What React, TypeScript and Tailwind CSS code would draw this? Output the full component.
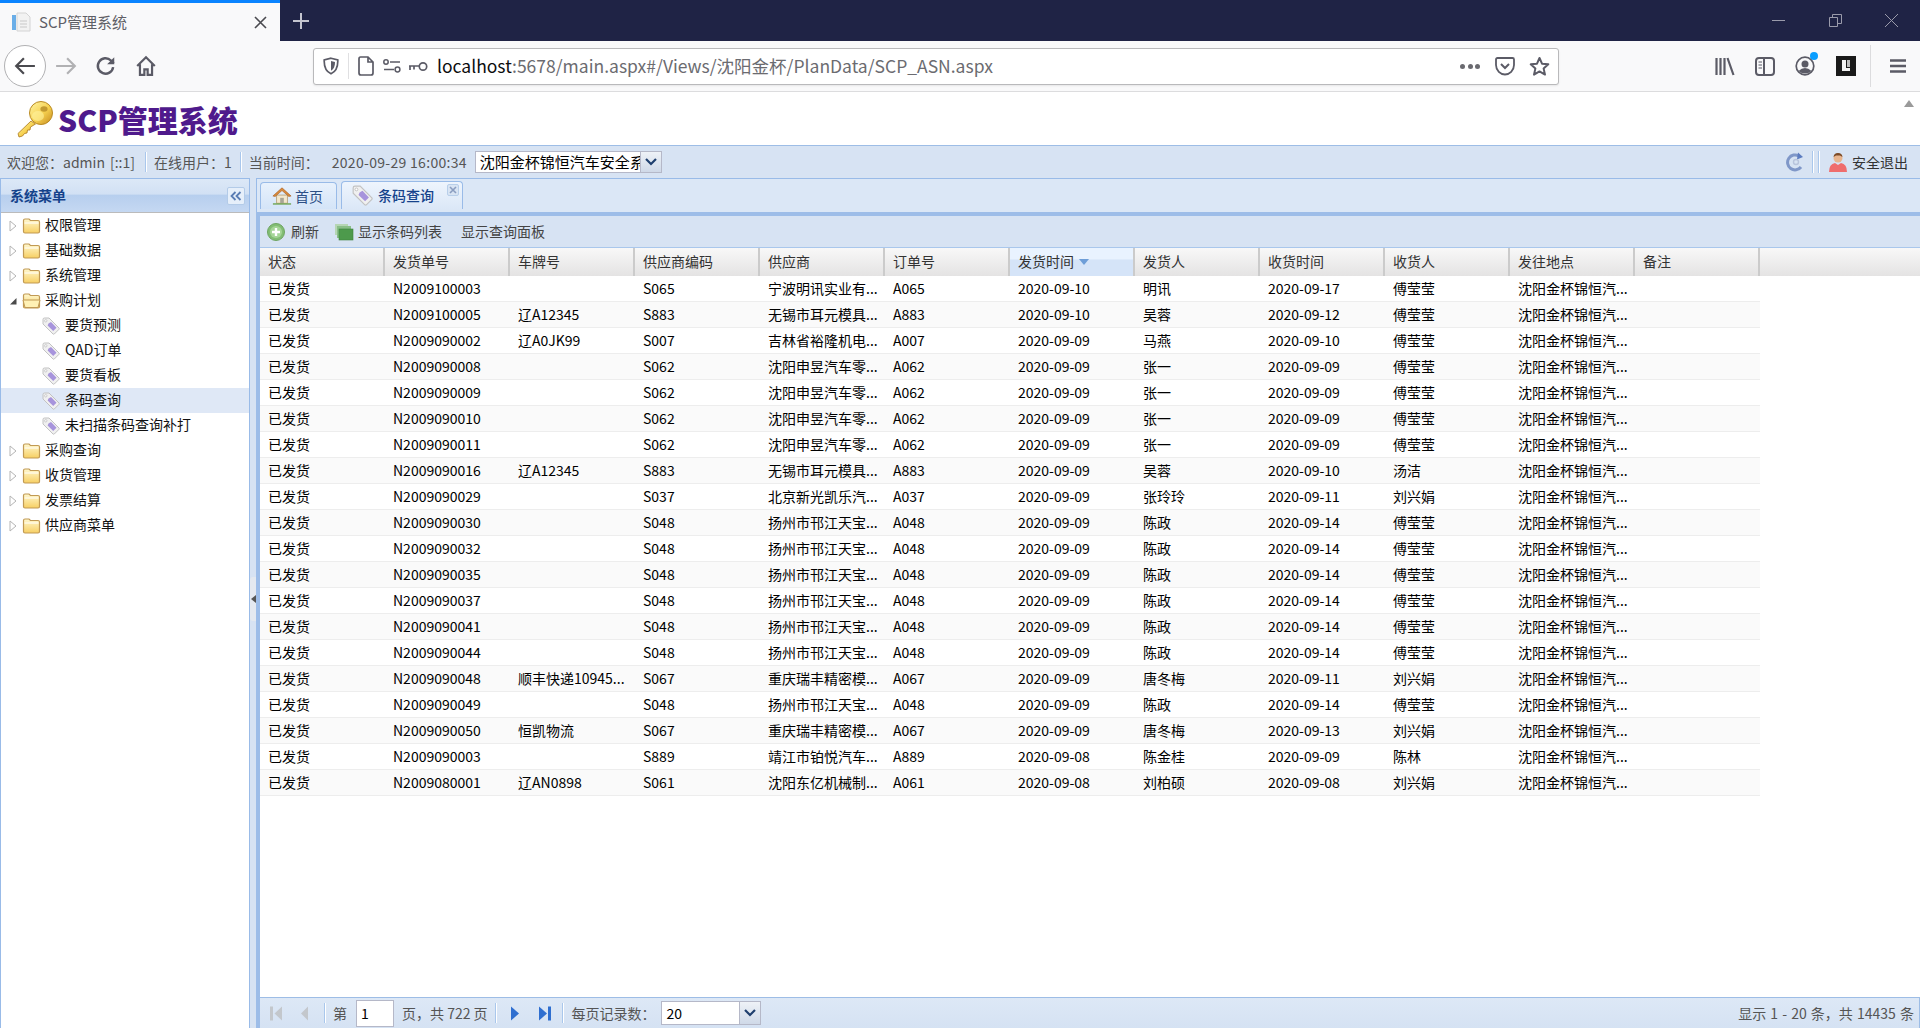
import React from "react";

const FF = "font-['Noto_Sans_CJK_SC','Microsoft_YaHei','Noto_Sans',sans-serif]";

const A = "沈阳金杯锦恒汽...";
const ZH = ["沈阳申昱汽车零...", "S062", "A062"];
const YZ = ["扬州市邗江天宝...", "S048", "A048"];
type R = [string, string, string, string, string, string, string, string, string];
const rows: R[] = [
  ["N2009100003", "", "S065", "宁波明讯实业有...", "A065", "2020-09-10", "明讯", "2020-09-17", "傅莹莹"],
  ["N2009100005", "辽A12345", "S883", "无锡市耳元模具...", "A883", "2020-09-10", "吴蓉", "2020-09-12", "傅莹莹"],
  ["N2009090002", "辽A0JK99", "S007", "吉林省裕隆机电...", "A007", "2020-09-09", "马燕", "2020-09-10", "傅莹莹"],
  ["N2009090008", "", ZH[1], ZH[0], ZH[2], "2020-09-09", "张一", "2020-09-09", "傅莹莹"],
  ["N2009090009", "", ZH[1], ZH[0], ZH[2], "2020-09-09", "张一", "2020-09-09", "傅莹莹"],
  ["N2009090010", "", ZH[1], ZH[0], ZH[2], "2020-09-09", "张一", "2020-09-09", "傅莹莹"],
  ["N2009090011", "", ZH[1], ZH[0], ZH[2], "2020-09-09", "张一", "2020-09-09", "傅莹莹"],
  ["N2009090016", "辽A12345", "S883", "无锡市耳元模具...", "A883", "2020-09-09", "吴蓉", "2020-09-10", "汤洁"],
  ["N2009090029", "", "S037", "北京新光凯乐汽...", "A037", "2020-09-09", "张玲玲", "2020-09-11", "刘兴娟"],
  ["N2009090030", "", YZ[1], YZ[0], YZ[2], "2020-09-09", "陈政", "2020-09-14", "傅莹莹"],
  ["N2009090032", "", YZ[1], YZ[0], YZ[2], "2020-09-09", "陈政", "2020-09-14", "傅莹莹"],
  ["N2009090035", "", YZ[1], YZ[0], YZ[2], "2020-09-09", "陈政", "2020-09-14", "傅莹莹"],
  ["N2009090037", "", YZ[1], YZ[0], YZ[2], "2020-09-09", "陈政", "2020-09-14", "傅莹莹"],
  ["N2009090041", "", YZ[1], YZ[0], YZ[2], "2020-09-09", "陈政", "2020-09-14", "傅莹莹"],
  ["N2009090044", "", YZ[1], YZ[0], YZ[2], "2020-09-09", "陈政", "2020-09-14", "傅莹莹"],
  ["N2009090048", "顺丰快递10945...", "S067", "重庆瑞丰精密模...", "A067", "2020-09-09", "唐冬梅", "2020-09-11", "刘兴娟"],
  ["N2009090049", "", YZ[1], YZ[0], YZ[2], "2020-09-09", "陈政", "2020-09-14", "傅莹莹"],
  ["N2009090050", "恒凯物流", "S067", "重庆瑞丰精密模...", "A067", "2020-09-09", "唐冬梅", "2020-09-13", "刘兴娟"],
  ["N2009090003", "", "S889", "靖江市铂悦汽车...", "A889", "2020-09-08", "陈金桂", "2020-09-09", "陈林"],
  ["N2009080001", "辽AN0898", "S061", "沈阳东亿机械制...", "A061", "2020-09-08", "刘柏硕", "2020-09-08", "刘兴娟"],
];
const headers = ["状态", "发货单号", "车牌号", "供应商编码", "供应商", "订单号", "发货时间", "发货人", "收货时间", "收货人", "发往地点", "备注"];

const Gray = "#5b5b66";

function Folder({ open }: { open?: boolean }) {
  return (
    <svg width="19" height="17" viewBox="0 0 19 17" className="shrink-0">
      <defs>
        <linearGradient id="fo" x1="0" y1="0" x2="0" y2="1">
          <stop offset="0" stopColor="#fff8cf" />
          <stop offset="1" stopColor="#f7cf63" />
        </linearGradient>
      </defs>
      <path d="M1.5 3.5 Q1.5 2 3 2 H7 L8.5 3.5 H16 Q17.5 3.5 17.5 5 V14.5 Q17.5 16 16 16 H3 Q1.5 16 1.5 14.5 Z" fill="url(#fo)" stroke="#c19a55" strokeWidth="1.2" />
      {open ? <path d="M1 8 H15 L18 8 L16 15.5 H3 Z" fill="#fff1b5" stroke="#c19a55" strokeWidth="1" /> : <path d="M2.5 6 H16.5" stroke="#fff" strokeWidth="1" />}
    </svg>
  );
}

function Tag({ size = 18 }: { size?: number }) {
  return (
    <svg width={size} height={size} viewBox="0 0 18 18" className="shrink-0">
      <path d="M1 2.5 Q1 1 2.5 1 H7 L17 11 Q17.5 11.7 17 12.3 L12.3 17 Q11.7 17.5 11 17 L1 7 Z" fill="#f0f0f0" stroke="#c2c2c2" />
      <path d="M6.5 6.5 L9 5 L14.5 10.8 L11.2 14 L5.6 8.6 Z" fill="#a794dc" />
      <circle cx="3.8" cy="3.8" r="1.2" fill="#fff" stroke="#b0b0b0" strokeWidth="0.6" />
    </svg>
  );
}

function Arrow({ open }: { open?: boolean }) {
  return open ? (
    <svg width="8" height="8" viewBox="0 0 8 8" className="shrink-0"><path d="M7.5 1 V7.5 H1 Z" fill="#4a4a4a" /></svg>
  ) : (
    <svg width="8" height="12" viewBox="0 0 8 12" className="shrink-0"><path d="M1 1 L7 6 L1 11 Z" fill="#fff" stroke="#b4b4b4" /></svg>
  );
}

function TreeFolder({ label, open }: { label: string; open?: boolean }) {
  return (
    <div className="flex h-[25px] items-center text-[14px] leading-[25px] text-[#111]">
      <div className="flex w-[21px] justify-center pl-[2px]"><Arrow open={open} /></div>
      <Folder open={open} />
      <span className="mb-[2px] ml-[4px]">{label}</span>
    </div>
  );
}

function TreeLeaf({ label, selected }: { label: string; selected?: boolean }) {
  return (
    <div className={`flex h-[25px] items-center pl-[41px] text-[14px] leading-[25px] text-[#111] ${selected ? "bg-[#dfe8f6]" : ""}`}>
      <Tag />
      <span className="mb-[2px] ml-[5px]">{label}</span>
    </div>
  );
}

function Home() {
  return (
    <svg width="20" height="20" viewBox="0 0 22 20" className="shrink-0">
      <path d="M5 9 H17 V18 H5 Z" fill="#f3e7cc" stroke="#b8a57f" />
      <path d="M9 12 H13 V18 H9 Z" fill="#a9a596" />
      <path d="M1 10 L11 1 L21 10 L18.5 10.5 L11 4 L3.5 10.5 Z" fill="#d98a3c" stroke="#a85f22" strokeWidth="0.7" />
      <path d="M1 18 H21 V19.5 H1 Z" fill="#6da34d" />
    </svg>
  );
}

function KeyLogo() {
  return (
    <svg width="37" height="38" viewBox="0 0 37 38" className="shrink-0">
      <defs>
        <linearGradient id="kg" x1="0" y1="0" x2="1" y2="1">
          <stop offset="0" stopColor="#fff6a8" />
          <stop offset="0.55" stopColor="#f6d04f" />
          <stop offset="1" stopColor="#c48a1e" />
        </linearGradient>
      </defs>
      <path d="M15 21 L2 33.5 L3 37 L6.5 36 L8.5 33.5 L11 33 L11.5 30 L14 30 L14.5 27 L19.5 24 Z" fill="url(#kg)" stroke="#a9781c" strokeWidth="0.8" />
      <circle cx="25" cy="13" r="11.5" fill="url(#kg)" stroke="#b98a24" />
      <ellipse cx="28" cy="9" rx="3.6" ry="2.8" fill="#b98f2a" opacity="0.85" />
      <ellipse cx="22" cy="16" rx="6" ry="5" fill="#fff3a0" opacity="0.6" />
    </svg>
  );
}

function Sep({ cls = "" }: { cls?: string }) {
  return <div className={`h-[20px] w-[2px] border-l border-[#a9c7ec] bg-white ${cls}`} />;
}

function PageBtn({ kind, off }: { kind: "first" | "prev" | "next" | "last"; off?: boolean }) {
  const c = off ? "#c3c7cc" : "#2f6fd0";
  return (
    <svg width="14" height="17" viewBox="0 0 14 17" className="shrink-0">
      {kind === "first" && <><rect x="1" y="1.5" width="3" height="14" fill={c} /><path d="M13 1.5 V15.5 L5.5 8.5 Z" fill={c} /></>}
      {kind === "prev" && <path d="M10 1.5 V15.5 L3 8.5 Z" fill={c} />}
      {kind === "next" && <path d="M3 1.5 V15.5 L11 8.5 Z" fill={c} />}
      {kind === "last" && <><path d="M1 1.5 V15.5 L9 8.5 Z" fill={c} /><rect x="10" y="1.5" width="3" height="14" fill={c} /></>}
    </svg>
  );
}

function ComboBtn({ w }: { w: string }) {
  return (
    <div className={`flex h-full ${w} items-center justify-center border-l border-[#b5b8c8] bg-gradient-to-b from-[#eef2f7] to-[#cfd9e8]`}>
      <svg width="12" height="8" viewBox="0 0 12 8"><path d="M1 1 L6 6 L11 1" fill="none" stroke="#1f3f6e" strokeWidth="2.2" /></svg>
    </div>
  );
}

export default function App() {
  return (
    <div className={`flex h-[1028px] w-[1920px] flex-col overflow-hidden bg-white ${FF}`}>
      {/* tab strip */}
      <div className="flex h-[41px] shrink-0 items-stretch bg-[#1f2345]">
        <div className="flex w-[280px] flex-col bg-[#f9f9fa]">
          <div className="h-[3px] bg-[#0a84ff]" />
          <div className="flex flex-1 items-center pl-[11px] pr-[13px]">
            <svg width="20" height="20" viewBox="0 0 20 20" className="shrink-0">
              <path d="M6 1 H15 L19 5 V19 H6 Z" fill="#f2f2f2" stroke="#d4d4d4" />
              <rect x="1" y="3" width="4" height="15" fill="#6aaee8" />
              <path d="M9 9 H16 M9 12 H16 M9 15 H16" stroke="#c8c8c8" />
            </svg>
            <span className="ml-[8px] flex-1 text-[15px] text-[#5f5f66]">SCP管理系统</span>
            <svg width="13" height="13" viewBox="0 0 13 13"><path d="M1 1 L12 12 M12 1 L1 12" stroke="#4a4a4f" strokeWidth="1.6" /></svg>
          </div>
        </div>
        <div className="flex w-[42px] items-center justify-center">
          <svg width="18" height="18" viewBox="0 0 18 18"><path d="M9 1 V17 M1 9 H17" stroke="#c4c5cf" strokeWidth="2" /></svg>
        </div>
        <div className="flex-1" />
        <div className="flex items-center pr-[21px]">
          <svg width="13" height="2" viewBox="0 0 13 2"><rect width="13" height="1" fill="#9a9bab" /></svg>
          <svg width="13" height="13" viewBox="0 0 13 13" className="ml-[44px]"><path d="M0.5 3.5 H8.5 V12.5 H0.5 Z M3.5 3.5 V0.5 H12.5 V9.5 H8.5" fill="none" stroke="#9a9bab" /></svg>
          <svg width="15" height="15" viewBox="0 0 15 15" className="ml-[42px]"><path d="M1 1 L14 14 M14 1 L1 14" stroke="#9a9bab" /></svg>
        </div>
      </div>

      {/* nav bar */}
      <div className="flex h-[51px] shrink-0 items-center border-b border-[#dcdcde] bg-[#f9f9fa]">
        <div className="ml-[4px] flex h-[42px] w-[42px] items-center justify-center rounded-full border border-[#b1b1b3] bg-white">
          <svg width="22" height="20" viewBox="0 0 20 18"><path d="M19 9 H2 M9 2 L2 9 L9 16" fill="none" stroke="#4a4a4f" strokeWidth="2" /></svg>
        </div>
        <svg width="22" height="20" viewBox="0 0 20 18" className="ml-[9px]"><path d="M1 9 H18 M11 2 L18 9 L11 16" fill="none" stroke="#b1b1b3" strokeWidth="2" /></svg>
        <svg width="22" height="22" viewBox="0 0 20 20" className="ml-[18px]"><path d="M16.5 11 A7 7 0 1 1 14.5 5 L17 7.5" fill="none" stroke={Gray} strokeWidth="2.2" /><path d="M17.5 2 V8.5 H11 Z" fill={Gray} /></svg>
        <svg width="22" height="22" viewBox="0 0 20 20" className="ml-[18px]"><path d="M2 10 L10 2 L18 10 M4.5 8.5 V18 H8.5 V13 H11.5 V18 H15.5 V8.5" fill="none" stroke={Gray} strokeWidth="2" /></svg>
        <div className="ml-[156px] flex h-[37px] w-[1246px] items-center rounded-[3px] border border-[#b9b9bb] bg-white pr-[8px] shadow-[0_1px_2px_rgba(0,0,0,0.08)]">
          <svg width="16" height="18" viewBox="0 0 16 18" className="ml-[9px]"><path d="M8 1.2 L14.8 3 C15 9 13 14.5 8 16.8 C3 14.5 1 9 1.2 3 Z" fill="none" stroke={Gray} strokeWidth="1.7" /><path d="M8 4 L12 5 C12 9 11 12 8 13.8 Z" fill={Gray} /></svg>
          <div className="ml-[9px] h-[26px] w-px bg-[#e0e0e2]" />
          <svg width="16" height="20" viewBox="0 0 16 20" className="ml-[9px]"><path d="M2.5 1 H10 L15 6 V17 Q15 19 13 19 H3 Q1 19 1 17 V3 Q1 1 2.5 1 Z M10 1 V6 H15" fill="none" stroke={Gray} strokeWidth="1.7" /></svg>
          <svg width="18" height="14" viewBox="0 0 18 14" className="ml-[9px]"><circle cx="3" cy="3" r="2.2" fill="none" stroke={Gray} strokeWidth="1.5" /><path d="M7 3 H17 M1 10.5 H11" stroke={Gray} strokeWidth="1.7" /><circle cx="14.5" cy="10.5" r="2.4" fill="none" stroke={Gray} strokeWidth="1.5" /></svg>
          <svg width="20" height="11" viewBox="0 0 20 11" className="ml-[7px]"><circle cx="15" cy="5.5" r="3.7" fill="none" stroke={Gray} strokeWidth="1.7" /><path d="M11 5 H1 M2 5 V9 M6 5 V8.5" stroke={Gray} strokeWidth="1.7" /></svg>
          <span className="ml-[9px] flex-1 whitespace-nowrap text-[17.5px] text-[#6b6b70]"><span className="text-[#0c0c0d]">localhost</span>:5678/main.aspx#/Views/沈阳金杯/PlanData/SCP_ASN.aspx</span>
          <div className="flex gap-[2.5px]"><i className="h-[5px] w-[5px] rounded-full bg-[#6a6a70]" /><i className="h-[5px] w-[5px] rounded-full bg-[#6a6a70]" /><i className="h-[5px] w-[5px] rounded-full bg-[#6a6a70]" /></div>
          <svg width="20" height="20" viewBox="0 0 20 20" className="ml-[15px]"><path d="M2.5 2 H17.5 Q19 2 19 3.5 V9 C19 14.5 14.5 18.5 10 18.5 C5.5 18.5 1 14.5 1 9 V3.5 Q1 2 2.5 2 Z" fill="none" stroke={Gray} strokeWidth="1.8" /><path d="M6 8 L10 12 L14 8" fill="none" stroke={Gray} strokeWidth="2" /></svg>
          <svg width="21" height="21" viewBox="0 0 21 21" className="ml-[14px]"><path d="M10.5 2 L13 7.7 L19.3 8.3 L14.6 12.4 L16 18.6 L10.5 15.4 L5 18.6 L6.4 12.4 L1.7 8.3 L8 7.7 Z" fill="none" stroke={Gray} strokeWidth="2" strokeLinejoin="round" /></svg>
        </div>
        <svg width="20" height="19" viewBox="0 0 20 19" className="ml-[156px]"><path d="M1.5 1 V18 M5.5 1 V18 M9.5 1 V18 M12.5 1 L18.5 18" stroke={Gray} strokeWidth="2.2" /></svg>
        <svg width="20" height="19" viewBox="0 0 20 19" className="ml-[20px]"><rect x="1" y="1" width="18" height="17" rx="3" fill="none" stroke={Gray} strokeWidth="2" /><path d="M9 1 V18" stroke={Gray} strokeWidth="2" /><path d="M3.5 5 H7 M3.5 8 H7 M3.5 11 H7" stroke={Gray} /></svg>
        <div className="relative ml-[20px] h-[20px] w-[20px]">
          <svg width="20" height="20" viewBox="0 0 20 20"><circle cx="10" cy="10" r="8.8" fill="none" stroke={Gray} strokeWidth="1.7" /><circle cx="10" cy="8" r="3.5" fill={Gray} /><path d="M3.5 15 Q10 9 16.5 15 Q10 20 3.5 15 Z" fill={Gray} /></svg>
          <i className="absolute right-[-3px] top-[-4px] h-[8px] w-[8px] rounded-full bg-[#0a9eff]" />
        </div>
        <div className="ml-[21px] flex h-[20px] w-[20px] items-center justify-center bg-[#1a1a1a]">
          <svg width="10" height="14" viewBox="0 0 10 14"><path d="M1 1 H5 V9 H9 V12 H1 Z" fill="#f2f2f2" /><path d="M6 1 H9 V8 H6 Z" fill="#f2f2f2" opacity="0.75" /></svg>
        </div>
        <div className="ml-[14px] h-[42px] w-px bg-[#dcdcde]" />
        <svg width="16" height="14" viewBox="0 0 16 14" className="ml-[19px]"><path d="M0 1.5 H16 M0 7 H16 M0 12.5 H16" stroke={Gray} strokeWidth="2.4" /></svg>
      </div>

      {/* logo header */}
      <div className="relative flex h-[53px] shrink-0 items-center bg-white pl-[16px]">
        <KeyLogo />
        <span className="ml-[5px] text-[30px] font-black leading-none text-[#4f1a8c]">SCP管理系统</span>
        <svg width="10" height="7" viewBox="0 0 10 7" className="absolute right-[6px] top-[8px]"><path d="M0 7 L5 0 L10 7 Z" fill="#9a9a9a" /></svg>
      </div>

      {/* status bar */}
      <div className="flex h-[33px] shrink-0 items-center border-t border-[#9dbde6] bg-[#d7e3f3] pl-[7px] pr-[12px] text-[14px] text-[#555]">
        <span className="whitespace-nowrap">欢迎您：admin<span className="ml-[5px]">[::1]</span></span>
        <Sep cls="ml-[10px]" />
        <span className="ml-[7px] whitespace-nowrap">在线用户：1</span>
        <Sep cls="ml-[8px]" />
        <span className="ml-[7px] whitespace-nowrap">当前时间：</span>
        <span className="ml-[13px] whitespace-nowrap tracking-[0.3px]">2020-09-29 16:00:34</span>
        <div className="ml-[8px] flex h-[22px] w-[187px] items-stretch overflow-hidden border border-[#b5b8c8] bg-white">
          <span className="flex-1 overflow-hidden whitespace-nowrap pl-[4px] text-[15px] leading-[20px] text-black">沈阳金杯锦恒汽车安全系统</span>
          <ComboBtn w="w-[21px]" />
        </div>
        <div className="flex-1" />
        <svg width="18" height="20" viewBox="0 0 18 20"><path d="M13 4 A7.5 7.5 0 1 0 15 15" fill="none" stroke="#7f97c8" strokeWidth="3" /><path d="M12 0.5 L17 5 L11 7.5 Z" fill="#5c7cc0" /><circle cx="10" cy="10" r="2.5" fill="none" stroke="#b8c4dc" strokeWidth="1.4" /></svg>
        <div className="ml-[8px] h-[22px] w-[2px] border-l border-[#a9c7ec] bg-white" />
        <div className="ml-[4px] h-[22px] w-[2px] border-l border-[#a9c7ec] bg-white" />
        <svg width="20" height="21" viewBox="0 0 20 21" className="ml-[8px]"><circle cx="10" cy="6" r="4.5" fill="#e8b58e" /><path d="M5.5 5 Q6 1 10 1 Q14 1 14.5 5 L12 3.5 L8 3.5 Z" fill="#7b4a26" /><path d="M1 20 Q1 12 7 11 L10 13 L13 11 Q19 12 19 20 Z" fill="#ef6d6d" /></svg>
        <span className="ml-[4px] text-[#333]">安全退出</span>
      </div>

      {/* main */}
      <div className="flex min-h-0 flex-1 bg-[#d7e3f3]">
        {/* sidebar */}
        <div className="flex w-[250px] shrink-0 flex-col border border-b-0 border-[#99bbe8] bg-white">
          <div className="flex h-[34px] shrink-0 items-center justify-between border-b border-[#bbbbbb] bg-[linear-gradient(#dce8f7_0%,#d2e1f4_45%,#b7cfee_50%,#c5d8f2_100%)] pl-[9px] pr-[4px]">
            <span className="text-[14px] font-bold text-[#15428b]">系统菜单</span>
            <div className="flex h-[18px] w-[18px] items-center justify-center rounded-[2px] border border-[#b3cbe8] bg-[#e6effa]">
              <svg width="12" height="10" viewBox="0 0 12 10"><path d="M5.5 1 L1.5 5 L5.5 9 M10.5 1 L6.5 5 L10.5 9" fill="none" stroke="#5a7db5" strokeWidth="1.8" /></svg>
            </div>
          </div>
          <TreeFolder label="权限管理" />
          <TreeFolder label="基础数据" />
          <TreeFolder label="系统管理" />
          <TreeFolder label="采购计划" open />
          <TreeLeaf label="要货预测" />
          <TreeLeaf label="QAD订单" />
          <TreeLeaf label="要货看板" />
          <TreeLeaf label="条码查询" selected />
          <TreeLeaf label="未扫描条码查询补打" />
          <TreeFolder label="采购查询" />
          <TreeFolder label="收货管理" />
          <TreeFolder label="发票结算" />
          <TreeFolder label="供应商菜单" />
        </div>

        {/* splitter */}
        <div className="flex w-[6px] shrink-0 items-center">
          <div className="mb-[8px] flex h-[44px] w-[6px] items-center justify-center rounded-l-[3px] bg-[#e4e9f0]">
            <svg width="5" height="8" viewBox="0 0 5 8"><path d="M5 0 V8 L0 4 Z" fill="#555" /></svg>
          </div>
        </div>

        {/* right */}
        <div className="flex min-w-0 flex-1 flex-col border-t border-[#99bbe8]">
          {/* tabs */}
          <div className="flex h-[30px] shrink-0 items-end gap-[4px] border-l border-[#99bbe8] bg-[#dbe7f6] pl-[3px]">
            <div className="flex h-[27px] w-[77px] items-center rounded-t-[4px] border border-b-0 border-[#99bbe8] bg-gradient-to-b from-[#e8f1fc] to-[#d4e4f8] pl-[11px]">
              <Home />
              <span className="ml-[3px] text-[14px] text-[#2c4f86]">首页</span>
            </div>
            <div className="relative flex h-[28px] w-[122px] items-center rounded-t-[4px] border border-b-0 border-[#99bbe8] bg-gradient-to-b from-[#eef5fd] to-[#dbe7f7] pl-[10px]">
              <Tag size={21} />
              <span className="ml-[5px] text-[14px] font-medium text-[#15428b]">条码查询</span>
              <div className="absolute right-[3px] top-[2px] flex h-[12px] w-[12px] items-center justify-center rounded-[2px] border border-[#b8cfea] bg-[#d8e4f3]">
                <svg width="8" height="8" viewBox="0 0 8 8"><path d="M1 1 L7 7 M7 1 L1 7" stroke="#8a9dc0" strokeWidth="1.6" /></svg>
              </div>
            </div>
          </div>
          <div className="h-[3px] shrink-0 border-l border-[#99bbe8] bg-[#dbe7f6]" />
          {/* body */}
          <div className="flex min-h-0 flex-1 bg-white">
            <div className="w-[4px] shrink-0 bg-[#9dbde8]" />
            <div className="flex min-w-0 flex-1 flex-col">
              <div className="h-[4px] shrink-0 bg-[#9dbde8]" />
              {/* toolbar */}
              <div className="flex h-[32px] shrink-0 items-center border-b border-[#a9c7ec] bg-[#d7e3f3] pl-[7px] text-[14px] text-[#444]">
                <svg width="18" height="18" viewBox="0 0 18 18"><circle cx="9" cy="9" r="8.5" fill="#82bd74" stroke="#6ea562" /><circle cx="9" cy="9" r="6" fill="#a5d598" /><path d="M9 5 V13 M5 9 H13" stroke="#fff" strokeWidth="2.4" /></svg>
                <span className="ml-[6px]">刷新</span>
                <svg width="20" height="18" viewBox="0 0 20 18" className="ml-[15px]"><rect x="1" y="1" width="13" height="11" fill="#b6d6b4" /><rect x="3" y="3" width="14" height="12" fill="#8abf88" /><rect x="5" y="6" width="14" height="11" fill="#4d9a4c" stroke="#3d833d" strokeWidth="0.6" /></svg>
                <span className="ml-[4px]">显示条码列表</span>
                <span className="ml-[19px]">显示查询面板</span>
              </div>
              {/* grid header */}
              <div className="grid h-[28px] shrink-0 grid-cols-[repeat(12,125px)] bg-gradient-to-b from-[#f8f8f8] to-[#e4e3e3] text-[14px] text-[#333]">
                {headers.map((h, i) => (
                  <div key={h} className={`flex items-center border-r-2 border-[#cbcbcb] pb-[1px] pl-[8px] ${i === 6 ? "bg-[linear-gradient(#e9f3ff_0%,#e9f3ff_40%,#d5e4f8_42%,#d5e4f8_100%)]" : ""}`}>
                    {h}
                    {i === 6 && <svg width="10" height="6" viewBox="0 0 10 6" className="ml-[5px]"><path d="M0 0 H10 L5 6 Z" fill="#6e9ed8" /></svg>}
                  </div>
                ))}
              </div>
              {/* rows */}
              <div className="min-h-0 flex-1 overflow-hidden bg-white">
                {rows.map((r, i) => (
                  <div key={i} className={`grid h-[26px] w-[1500px] grid-cols-[repeat(12,125px)] items-center border-b border-[#ededed] text-[14px] leading-[25px] text-black ${i % 2 ? "bg-[#fafafa]" : "bg-white"}`}>
                    <div className="pl-[8px]">已发货</div>
                    {r.map((c, j) => <div key={j} className="overflow-hidden whitespace-nowrap pl-[8px]">{c}</div>)}
                    <div className="overflow-hidden whitespace-nowrap pl-[8px]">{A}</div>
                    <div />
                  </div>
                ))}
              </div>
              {/* pager */}
              <div className="flex h-[31px] shrink-0 items-center border-t border-r border-[#9dbde6] bg-gradient-to-b from-[#dde8f6] to-[#d5e2f3] text-[14px] text-[#555]">
                <div className="ml-[9px]"><PageBtn kind="first" off /></div>
                <div className="ml-[15px]"><PageBtn kind="prev" off /></div>
                <Sep cls="ml-[12px]" />
                <span className="ml-[7px]">第</span>
                <div className="ml-[9px] flex h-[27px] w-[38px] items-center border border-[#b5b8c8] bg-white pl-[4px] text-black">1</div>
                <span className="ml-[8px] whitespace-nowrap">页，共 722 页</span>
                <Sep cls="ml-[7px]" />
                <div className="ml-[11px]"><PageBtn kind="next" /></div>
                <div className="ml-[16px]"><PageBtn kind="last" /></div>
                <Sep cls="ml-[10px]" />
                <span className="ml-[8px] whitespace-nowrap">每页记录数：</span>
                <div className="ml-[5px] flex h-[24px] w-[100px] items-stretch border border-[#b5b8c8] bg-white">
                  <span className="flex-1 pl-[5px] leading-[22px] text-black">20</span>
                  <ComboBtn w="w-[21px]" />
                </div>
                <div className="flex-1" />
                <span className="mr-[5px] whitespace-nowrap [word-spacing:1px]">显示 1 - 20 条，共 14435 条</span>
              </div>
            </div>
          </div>
        </div>
      </div>
    </div>
  );
}
